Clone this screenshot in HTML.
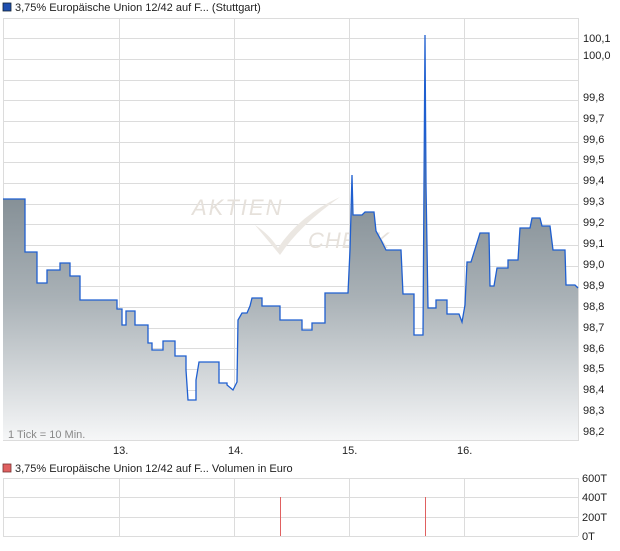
<!DOCTYPE html>
<html><head><meta charset="utf-8"><style>
body{margin:0;width:620px;height:546px;background:#fff;overflow:hidden;font-family:"Liberation Sans",sans-serif}
svg text{font-family:"Liberation Sans",sans-serif;font-size:11px;fill:#222}
</style></head><body>
<svg width="620" height="546" xmlns="http://www.w3.org/2000/svg">
<defs><linearGradient id="g" gradientUnits="userSpaceOnUse" x1="0" y1="180" x2="0" y2="441">
<stop offset="0" stop-color="#7f8a91"/><stop offset="0.45" stop-color="#a9b1b6"/><stop offset="1" stop-color="#f6f7f8"/></linearGradient></defs>
<rect x="3" y="3" width="8" height="8" fill="#1f4fb0" stroke="#123" stroke-width="0.8"/>
<text x="15" y="11">3,75% Europäische Union 12/42 auf F... (Stuttgart)</text>
<g stroke="#dcdcdc" stroke-width="1">
<line x1="3.5" y1="18" x2="3.5" y2="441"/>
<line x1="119.5" y1="18" x2="119.5" y2="441"/><line x1="234.5" y1="18" x2="234.5" y2="441"/>
<line x1="349.5" y1="18" x2="349.5" y2="441"/><line x1="464.5" y1="18" x2="464.5" y2="441"/>
<line x1="578.5" y1="18" x2="578.5" y2="441"/>
<line x1="3" y1="18.5" x2="578" y2="18.5"/>
<line x1="3" y1="38.5" x2="578" y2="38.5"/><line x1="3" y1="59.5" x2="578" y2="59.5"/><line x1="3" y1="80.5" x2="578" y2="80.5"/><line x1="3" y1="100.5" x2="578" y2="100.5"/><line x1="3" y1="121.5" x2="578" y2="121.5"/><line x1="3" y1="142.5" x2="578" y2="142.5"/><line x1="3" y1="162.5" x2="578" y2="162.5"/><line x1="3" y1="183.5" x2="578" y2="183.5"/><line x1="3" y1="204.5" x2="578" y2="204.5"/><line x1="3" y1="224.5" x2="578" y2="224.5"/><line x1="3" y1="245.5" x2="578" y2="245.5"/><line x1="3" y1="266.5" x2="578" y2="266.5"/><line x1="3" y1="286.5" x2="578" y2="286.5"/><line x1="3" y1="307.5" x2="578" y2="307.5"/><line x1="3" y1="328.5" x2="578" y2="328.5"/><line x1="3" y1="348.5" x2="578" y2="348.5"/><line x1="3" y1="369.5" x2="578" y2="369.5"/><line x1="3" y1="390.5" x2="578" y2="390.5"/><line x1="3" y1="410.5" x2="578" y2="410.5"/><line x1="3" y1="440.5" x2="578" y2="440.5"/>
</g>
<text x="192" y="215" style="font-size:22px;fill:#e6e1db;font-style:italic;letter-spacing:2px">AKTIEN</text>
<text x="308" y="248" style="font-size:22px;fill:#e6e1db;font-style:italic;letter-spacing:1px">CHECK</text>
<path d="M255 225 Q270 235 278 248 Q300 215 340 197 Q300 225 280 255 Z" fill="#ebe7e2"/>
<path fill="url(#g)" stroke="none" d="M3,199 L25,199 L25,252 L37,252 L37,283 L47,283 L47,270 L60,270 L60,263 L70,263 L70,276 L80,276 L80,300 L117,300 L117,309 L122,309 L122,325 L126,325 L126,311 L135,311 L135,325 L148,325 L148,343 L152,343 L152,350 L163,350 L163,341 L175,341 L175,356 L186,356 L186,370 L188,400 L196,400 L196,380 L199,362 L219,362 L219,383 L227,383 L227,385 L233,390 L237,382 L238,320 L242,313 L247,313 L250,306 L252,298 L262,298 L262,306 L280,306 L280,320 L302,320 L302,330 L312,330 L312,323 L325,323 L325,293 L348,293 L350,250 L352,175 L353,215 L362,215 L365,212 L374,212 L376,231 L381,240 L386,250 L401,250 L403,294 L414,294 L414,335 L423,335 L424,185 L425,35 L426,185 L428,308 L436,308 L436,300 L447,300 L447,314 L459,314 L462,322 L465,305 L467,262 L471,262 L480,233 L489,233 L490,286 L494,286 L497,268 L508,268 L508,260 L518,260 L520,228 L530,228 L532,218 L540,218 L542,226 L550,226 L553,250 L565,250 L566,285 L575,285 L578,288 L578,440 L3,440 Z"/>
<polyline fill="none" stroke="#1f5fd0" stroke-width="1.3" points="3,199 25,199 25,252 37,252 37,283 47,283 47,270 60,270 60,263 70,263 70,276 80,276 80,300 117,300 117,309 122,309 122,325 126,325 126,311 135,311 135,325 148,325 148,343 152,343 152,350 163,350 163,341 175,341 175,356 186,356 186,370 188,400 196,400 196,380 199,362 219,362 219,383 227,383 227,385 233,390 237,382 238,320 242,313 247,313 250,306 252,298 262,298 262,306 280,306 280,320 302,320 302,330 312,330 312,323 325,323 325,293 348,293 350,250 352,175 353,215 362,215 365,212 374,212 376,231 381,240 386,250 401,250 403,294 414,294 414,335 423,335 424,185 425,35 426,185 428,308 436,308 436,300 447,300 447,314 459,314 462,322 465,305 467,262 471,262 480,233 489,233 490,286 494,286 497,268 508,268 508,260 518,260 520,228 530,228 532,218 540,218 542,226 550,226 553,250 565,250 566,285 575,285 578,288"/>
<text x="8" y="438" style="fill:#888">1 Tick = 10 Min.</text>
<g>
<text x="583" y="42">100,1</text><text x="583" y="59">100,0</text><text x="583" y="101">99,8</text><text x="583" y="122">99,7</text><text x="583" y="143">99,6</text><text x="583" y="163">99,5</text><text x="583" y="184">99,4</text><text x="583" y="205">99,3</text><text x="583" y="226">99,2</text><text x="583" y="247">99,1</text><text x="583" y="268">99,0</text><text x="583" y="289">98,9</text><text x="583" y="310">98,8</text><text x="583" y="331">98,7</text><text x="583" y="352">98,6</text><text x="583" y="372">98,5</text><text x="583" y="393">98,4</text><text x="583" y="414">98,3</text><text x="583" y="435">98,2</text>
<text x="113" y="454">13.</text><text x="228" y="454">14.</text><text x="342" y="454">15.</text><text x="457" y="454">16.</text>
</g>
<rect x="3" y="464" width="8" height="8" fill="#e06060" stroke="#733" stroke-width="0.8"/>
<text x="15" y="472">3,75% Europäische Union 12/42 auf F... Volumen in Euro</text>
<g stroke="#dcdcdc">
<line x1="3" y1="478.5" x2="578" y2="478.5"/><line x1="3" y1="497.5" x2="578" y2="497.5"/><line x1="3" y1="517.5" x2="578" y2="517.5"/><line x1="3" y1="536.5" x2="578" y2="536.5"/>
<line x1="3.5" y1="478" x2="3.5" y2="536"/><line x1="119.5" y1="478" x2="119.5" y2="536"/><line x1="234.5" y1="478" x2="234.5" y2="536"/><line x1="349.5" y1="478" x2="349.5" y2="536"/><line x1="464.5" y1="478" x2="464.5" y2="536"/><line x1="578.5" y1="478" x2="578.5" y2="536"/>
</g>
<line x1="280.5" y1="497" x2="280.5" y2="536" stroke="#e06060"/>
<line x1="425.5" y1="497" x2="425.5" y2="536" stroke="#e06060"/>
<text x="582" y="482">600T</text><text x="582" y="501">400T</text><text x="582" y="521">200T</text><text x="582" y="540">0T</text>
</svg>
</body></html>
